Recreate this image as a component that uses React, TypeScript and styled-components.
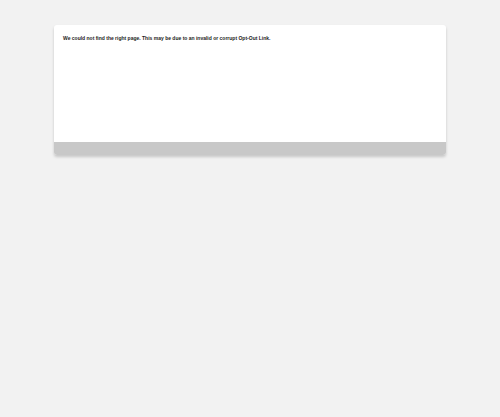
import React from "react";
import styled, { createGlobalStyle } from "styled-components";

const GlobalStyle = createGlobalStyle`
  html, body {
    margin: 0;
    padding: 0;
    background: #f2f2f2;
    font-family: "Liberation Sans", Arial, sans-serif;
  }
`;

const Page = styled.div`
  width: 500px;
  height: 417px;
  padding-top: 25px;
  box-sizing: border-box;
  display: flex;
  justify-content: center;
`;

const Card = styled.div`
  width: 392px;
  height: 130px;
  margin-left: 0;
  background: #ffffff;
  border-radius: 3px;
  box-shadow: 0 2px 3px rgba(0, 0, 0, 0.18);
  display: flex;
  flex-direction: column;
  overflow: hidden;
`;

const Body = styled.div`
  flex: 1;
  padding: 10px 9px;
`;

const Message = styled.p`
  margin: 0;
  font-size: 5px;
  font-weight: 700;
  color: #222;
  line-height: 6px;
`;

const Footer = styled.div`
  height: 13px;
  background: #c8c8c8;
`;

const App = () => (
  <>
    <GlobalStyle />
    <Page>
      <Card>
        <Body>
          <Message>
            We could not find the right page. This may be due to an invalid or corrupt Opt-Out Link.
          </Message>
        </Body>
        <Footer />
      </Card>
    </Page>
  </>
);

export default App;
